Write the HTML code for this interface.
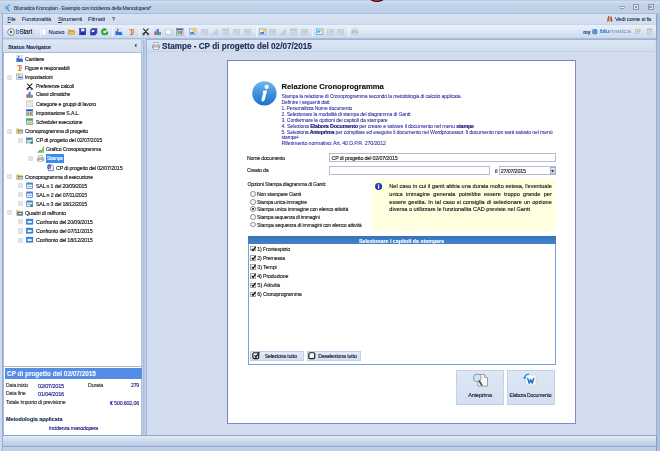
<!DOCTYPE html>
<html lang="it"><head><meta charset="utf-8"><title>Blumatica Kronoplan</title>
<style>
html,body{margin:0;padding:0}
body{width:660px;height:451px;overflow:hidden;position:relative;background:#c6d6ec;font-family:"Liberation Sans",sans-serif;}
.a{position:absolute;box-sizing:border-box}
.t{position:absolute;white-space:nowrap;line-height:10px;height:10px;font-family:"Liberation Sans",sans-serif;-webkit-text-stroke:.14px currentColor}
.t b{-webkit-text-stroke:.16px currentColor;color:#14147c}
svg{position:absolute;overflow:visible}
.exp{position:absolute;width:3.4px;height:3.4px;background:#e4e6ea;box-shadow:0 0 0 .5px #b4b9c4}
.ck{position:absolute;box-sizing:border-box;width:5.2px;height:5.2px;border:.5px solid #a6a6a6;background:#fff}
.rd{position:absolute;box-sizing:border-box;width:5.8px;height:5.8px;border:.6px solid #8c8c8c;border-radius:50%;background:radial-gradient(#fff 40%,#e4e4e4)}
.nt{-webkit-text-stroke:.12px currentColor;font-size:5.6px;line-height:8px;height:8px;color:#111;text-align:justify;text-align-last:justify;white-space:nowrap}
#w{position:absolute;left:0;top:0;width:660px;height:451px;will-change:transform;overflow:hidden}
</style></head><body><div id="w">
<!-- frame -->
<div class="a" style="left:0;top:0;width:660px;height:13.7px;background:linear-gradient(#b9cae4 0,#b9cae4 .9px,#d3dff0 1.6px,#c9d7ec 3.2px,#c0d1e8 5px,#bed0e8 12.6px,#a9bcda 13.3px)"></div>
<div class="a" style="left:370px;top:-5px;width:14px;height:6.600px;border-radius:50%;background:radial-gradient(#e8302a 35%,#2a0a0a 62%)"></div>
<div class="a" style="left:0;top:13.7px;width:660px;height:10.8px;background:linear-gradient(#d8e3f2,#d1deef)"></div>
<div class="a" style="left:0;top:24.5px;width:660px;height:14px;background:linear-gradient(#eaf1f9,#dde7f5 45%,#cbd9ed);border-bottom:.5px solid #a9bcd9"></div>
<div class="a" style="left:0;top:38.5px;width:660px;height:397px;background:#c7d6ec"></div>
<!-- status bar -->
<div class="a" style="left:0;top:434.600px;width:660px;height:12.100px;background:linear-gradient(#e3ebf6,#d3dff0 30%,#b9cae3);border-top:.8px solid #8fa7cf;border-bottom:.7px solid #8fa7cf"></div>
<div class="a" style="left:0;top:446.7px;width:660px;height:4.3px;background:#c0d0e8"></div>
<!-- left/right frame edges -->
<div class="a" style="left:0;top:13.700px;width:3.300px;height:437.300px;background:#cddaee;border-right:.9px solid #94abd1"></div>
<div class="a" style="left:656px;top:14px;width:4px;height:437px;background:#adc1de;border-left:.9px solid #86a0ca"></div>
<!-- app icon -->
<svg style="left:4.5px;top:4px" width="5.5" height="7.5" viewBox="0 0 11 15"><path d="M1 7.5L9 1.500M1 7.500L9 13.500M6 3.600V11.400" stroke="#3da5e0" stroke-width="2.2" fill="none" stroke-linecap="round"/></svg>
<!-- window controls -->
<div class="a" style="left:619px;top:6.3px;width:6px;height:3px;border:.5px solid #8796b2;border-radius:1.5px;background:#e9eff8"></div>
<div class="a" style="left:633px;top:4.3px;width:6px;height:5.6px;border:.5px solid #8796b2;background:#dce6f3"></div>
<div class="a" style="left:634.8px;top:5.6px;width:2.4px;height:2.2px;border:.5px solid #8796b2;background:#eef3fa"></div>
<div class="a" style="left:647.5px;top:4.3px;width:6px;height:5.6px;border:.5px solid #8796b2;background:#dce6f3"></div>
<div class="a" style="left:649px;top:5.8px;width:3px;height:2.6px;border:.5px solid #8796b2;background:#eef3fa"></div>

<!-- left nav panel -->
<div class="a" style="left:3.300px;top:39.6px;width:139.200px;height:13px;background:linear-gradient(#dde7f4,#d3dff0);border-bottom:.5px solid #a9bcd9;border-right:.5px solid #b4c5e0"></div>
<div class="a" style="left:3.300px;top:52.5px;width:139.200px;height:382.200px;background:#fff;border:.5px solid #a9bcd9;border-top:none;border-bottom:none"></div>
<div class="a" style="left:4.3px;top:365.700px;width:137.7px;height:1px;background:#b4b7c0"></div>
<!-- splitter -->
<div class="a" style="left:142.5px;top:39.5px;width:3.5px;height:395px;background:linear-gradient(90deg,#9fb3d4,#b4c5e0 40%,#c3d2e9)"></div>
<!-- info panel -->
<div class="a" style="left:4.5px;top:368px;width:137px;height:11px;background:#558ce6"></div>

<!-- main panel -->
<div class="a" style="left:146px;top:39.3px;width:510.5px;height:395.4px;background:#d1ddef;border:.6px solid #9fb3d6;border-bottom:none"></div>
<div class="a" style="left:146.6px;top:39.9px;width:508.8px;height:12px;background:linear-gradient(#dbe5f3,#d2deef);border-bottom:.5px solid #c4d1e7"></div>
<!-- dialog -->
<div class="a" style="left:227px;top:60px;width:349.300px;height:363.800px;background:#fff;border:1.2px solid #8388cc;border-left:1.600px solid #7a7fc6;border-top:1.600px solid #7a7fc6"></div>

<!-- tree selection -->
<div class="a" style="left:45.5px;top:154.2px;width:18.5px;height:8.6px;background:#3a8cf0"></div>

<!-- inputs -->
<div class="a" style="left:329px;top:153.2px;width:227px;height:8.6px;background:#fff;border:.6px solid #b8bcd0"></div>
<div class="a" style="left:329px;top:166.3px;width:161px;height:9px;background:#fff;border:.6px solid #b8bcd0"></div>
<div class="a" style="left:499px;top:166.3px;width:57px;height:9px;background:#fff;border:.6px solid #b8bcd0"></div>
<div class="a" style="left:550px;top:167px;width:5.5px;height:7.7px;background:linear-gradient(#e8ecf4,#b9c3d8);border:.5px solid #a7aec6"></div>
<svg style="left:551.2px;top:169.6px" width="3.2" height="2.2" viewBox="0 0 4 3"><path d="M0 0H4L2 3z" fill="#222"/></svg>

<!-- note box -->
<div class="a" style="left:371.500px;top:178.8px;width:184.500px;height:52.500px;background:#ffffe0"></div>
<svg style="left:374.800px;top:182.900px" width="7.2" height="7.2" viewBox="0 0 14 14"><circle cx="7" cy="7" r="6.800" fill="#1a2fb0"/><circle cx="7" cy="5" r="4.500" fill="#3a5fd8" opacity=".6"/><circle cx="7" cy="3.8" r="1.3" fill="#fff"/><rect x="5.9" y="5.8" width="2.2" height="5.2" fill="#fff"/></svg>
<div class="a nt" style="left:389.3px;top:182.2px;width:162.5px">Nel caso in cui il gantt abbia una durata molto estesa, l'eventuale</div>
<div class="a nt" style="left:389.3px;top:189.9px;width:162.5px">unica immagine generata potrebbe essere troppo grande per</div>
<div class="a nt" style="left:389.3px;top:197.6px;width:162.5px">essere gestita. In tal caso si consiglia di selezionare un opzione</div>
<div class="a nt" style="left:389.3px;top:205.3px;width:162.5px;text-align-last:left">diversa o utilizzare le funzionalita CAD previste nel Gantt</div>

<!-- chapter list -->
<div class="a" style="left:247.6px;top:236px;width:308.4px;height:128.900px;background:#fff;border:.8px solid #77a3dc"></div>
<div class="a" style="left:247.6px;top:236px;width:308.4px;height:8.2px;background:linear-gradient(#3974ba,#4381c8)"></div>

<!-- small buttons -->
<div class="a" style="left:250px;top:350.5px;width:54px;height:10.3px;background:linear-gradient(#e2eaf6,#d3dff1);border:.5px solid #c3d1e8"></div>
<div class="a" style="left:306.7px;top:350.5px;width:54px;height:10.3px;background:linear-gradient(#e2eaf6,#d3dff1);border:.5px solid #c3d1e8"></div>
<!-- big buttons -->
<div class="a" style="left:456px;top:369.7px;width:48px;height:35.2px;background:linear-gradient(#dde7f5,#d3dff1);border:.5px solid #c3d1e8"></div>
<div class="a" style="left:506.7px;top:369.7px;width:48px;height:35.2px;background:linear-gradient(#dde7f5,#d3dff1);border:.5px solid #c3d1e8"></div>


<!-- big info icon -->
<svg style="left:251.6px;top:81.4px" width="24.8" height="24.8" viewBox="0 0 50 50"><defs><linearGradient id="gi" x1="0" y1="0" x2="0" y2="1"><stop offset="0" stop-color="#74b6ea"/><stop offset=".55" stop-color="#3a8fda"/><stop offset="1" stop-color="#1c72c6"/></linearGradient></defs><circle cx="25" cy="25" r="24.5" fill="url(#gi)"/><circle cx="29.500" cy="12" r="4.200" fill="#fff"/><path d="M23.500 19.500l7-1L26 37q-.9 3.800-4.200 4.200-3.600.2-2.600-3.800l3.300-13.400q.3-1.800-1.700-2.400z" fill="#fff"/></svg>
<!-- anteprima icon -->
<svg style="left:472px;top:373px" width="17" height="14" viewBox="0 0 34 28"><path d="M12 3h13l6 6v17H12z" fill="#fafafa" stroke="#8a8a8a" stroke-width="1.600"/><path d="M25 3v6h6" fill="#e4e4e4" stroke="#8a8a8a" stroke-width="1.300"/><circle cx="10.500" cy="9.500" r="7.500" fill="#cfe6f7" stroke="#8f9aa8" stroke-width="2.200"/><path d="M14.500 16l5 8" stroke="#555" stroke-width="3.400" stroke-linecap="round"/></svg>
<!-- elabora icon -->
<svg style="left:522.500px;top:373px" width="15" height="14" viewBox="0 0 30 28"><path d="M6 4h20v22H6z" fill="#fbfbfb" stroke="#d2d2d2" stroke-width="1.200"/><path d="M6 22h20v4H6z" fill="#e6e6e6"/><path d="M9.500 11l3 9.500 3-7.500 3 7.500 3-9.500" fill="none" stroke="#1f6fc4" stroke-width="2.800" stroke-linejoin="round" stroke-linecap="round"/><path d="M3 10q1-7 8-7.500" fill="none" stroke="#2d9fe0" stroke-width="2.600" stroke-linecap="round"/><path d="M0 8l3.500 5 3.500-5z" fill="#2d9fe0"/></svg>
<!-- select buttons icons -->
<svg style="left:251.800px;top:351.400px" width="8.200" height="8.200" viewBox="0 0 14 14"><rect x="1.500" y="3" width="10" height="10" rx="2.200" fill="#fff" stroke="#1a1a1a" stroke-width="2"/><path d="M4.200 7.500l2.500 3L12.500 2" fill="none" stroke="#1a1a1a" stroke-width="2.400"/></svg>
<svg style="left:308.300px;top:351.400px" width="8.200" height="8.200" viewBox="0 0 14 14"><rect x="1.500" y="3" width="10" height="10" rx="2.200" fill="#fff" stroke="#1a1a1a" stroke-width="2"/></svg>
<svg style="left:15.7px;top:55.4px" width="7.3" height="7.3" viewBox="0 0 16 16"><rect x="1" y="1" width="14" height="14" fill="#e6edf8" stroke="#b8c6de" stroke-width=".8"/><path d="M1 15V8l4-3 3 4 3-2 4 3v5z" fill="#2a6fd6"/><circle cx="6" cy="3.5" r="1.8" fill="#e0402a"/></svg>
<svg style="left:15.7px;top:64.4px" width="7.3" height="7.3" viewBox="0 0 16 16"><path d="M2 2.500h11V5H9.500v10h-3V5H2z" fill="#e8782a"/><path d="M12 5v4.500" stroke="#7a6a5a" stroke-width="1.100"/><rect x="10.800" y="9" width="2.400" height="2.400" fill="#9a9a9a"/><rect x="4.500" y="13.500" width="7" height="1.500" fill="#c9641e"/></svg>
<svg style="left:15.7px;top:73.4px" width="7.3" height="7.3" viewBox="0 0 16 16"><rect x="1" y="2" width="14" height="12" fill="#f4f6fa" stroke="#6d86b3" stroke-width="1"/><rect x="1.5" y="2.5" width="8" height="4" fill="#f2c640"/><rect x="4" y="8" width="10.5" height="3.5" fill="#3f7fdc"/></svg>
<svg style="left:26.2px;top:82.7px" width="7.3" height="7.3" viewBox="0 0 16 16"><path d="M3 2l10 11M13 2L3 13" stroke="#222" stroke-width="2.2" stroke-linecap="round"/><circle cx="3.5" cy="13" r="2" fill="none" stroke="#222" stroke-width="1.4"/><circle cx="12.5" cy="13" r="2" fill="none" stroke="#222" stroke-width="1.4"/></svg>
<svg style="left:26.2px;top:91.4px" width="7.3" height="7.3" viewBox="0 0 16 16"><rect x="1" y="7" width="4.5" height="8" fill="#e0413a"/><rect x="5.7" y="2" width="4.6" height="13" fill="#3b78d8"/><rect x="10.5" y="8.5" width="4.5" height="6.5" fill="#4caf50"/></svg>
<svg style="left:26.2px;top:100.4px" width="7.3" height="7.3" viewBox="0 0 16 16"><rect x="1" y="2" width="14" height="12" fill="#f3f5fa" stroke="#9aa9c4" stroke-width="1"/><rect x="1.5" y="2.5" width="13" height="3" fill="#f3dc8a"/><path d="M2 9h12M2 11.5h12" stroke="#c9d2e2" stroke-width="1"/></svg>
<svg style="left:26.2px;top:109.4px" width="7.3" height="7.3" viewBox="0 0 16 16"><rect x="1" y="1" width="14" height="14" fill="#eef2f8" stroke="#3b56a0" stroke-width="1"/><rect x="1.5" y="1.5" width="13" height="3.5" fill="#2b4fb0"/><rect x="3" y="7" width="4" height="6" fill="#4caf50"/><rect x="8.5" y="7" width="4" height="6" fill="#e0553a"/></svg>
<svg style="left:26.2px;top:118.4px" width="7.3" height="7.3" viewBox="0 0 16 16"><rect x="1" y="1.5" width="14" height="13" fill="#f2f6f2" stroke="#3e9a56" stroke-width="1.4"/><rect x="1.5" y="2" width="13" height="4" fill="#46a860"/><rect x="3.5" y="8" width="9" height="4.5" fill="#e8a07a"/></svg>
<svg style="left:15.7px;top:127.4px" width="7.3" height="7.3" viewBox="0 0 16 16"><path d="M1 4h5l1.5 1.5H15V14H1z" fill="#f1c84a" stroke="#c79a26" stroke-width=".8"/><rect x="5" y="7" width="9" height="6" fill="#eaf0fa" stroke="#3f74cf" stroke-width="1"/><rect x="5.5" y="7.5" width="8" height="2" fill="#3f74cf"/></svg>
<svg style="left:26.2px;top:136.70000000000002px" width="7.3" height="7.3" viewBox="0 0 16 16"><rect x="1" y="2" width="13" height="11" fill="#e9f0fb" stroke="#2f66c7" stroke-width="1.3"/><rect x="1.5" y="2.5" width="12" height="3.5" fill="#2f66c7"/><rect x="3" y="7.5" width="6" height="2.5" fill="#f0b73a"/><circle cx="12.5" cy="12.5" r="3" fill="#25a839"/></svg>
<svg style="left:36.7px;top:145.70000000000002px" width="7.3" height="7.3" viewBox="0 0 16 16"><path d="M1 15L7 9l2.5 2L15 1v14z" fill="#5db552"/><path d="M1 15L7 9l2.5 2L15 1" fill="none" stroke="#2f8a2f" stroke-width="1.2"/><path d="M4 15V12M8 15v-5M12 15V6" stroke="#d9efd4" stroke-width="1"/></svg>
<svg style="left:36.7px;top:154.9px" width="7.3" height="7.3" viewBox="0 0 16 16"><rect x="4" y="1.5" width="8" height="5" fill="#fff" stroke="#777" stroke-width=".9"/><path d="M1 7.5q0-1.5 1.5-1.5h11q1.5 0 1.5 1.5V12H1z" fill="#c9ccd4" stroke="#666" stroke-width=".9"/><rect x="3.5" y="10" width="9" height="4.5" fill="#f6f6f6" stroke="#777" stroke-width=".9"/></svg>
<svg style="left:47.2px;top:163.9px" width="7.3" height="7.3" viewBox="0 0 16 16"><path d="M3 1.5h7.5L14 5v9.5H3z" fill="#f4f6fb" stroke="#2a2f7a" stroke-width="1.3"/><rect x="1" y="3" width="7.5" height="7" fill="#2a2f8a"/><path d="M3 5l1 3.5 1-2.5 1 2.5 1-3.5" stroke="#fff" stroke-width=".9" fill="none"/></svg>
<svg style="left:15.7px;top:172.9px" width="7.3" height="7.3" viewBox="0 0 16 16"><path d="M1 4h5l1.5 1.5H15V14H1z" fill="#f1c84a" stroke="#c79a26" stroke-width=".8"/><rect x="5" y="7" width="9" height="6" fill="#eaf0fa" stroke="#3f74cf" stroke-width="1"/><rect x="5.5" y="7.5" width="8" height="2" fill="#3f74cf"/></svg>
<svg style="left:26.2px;top:181.9px" width="7.3" height="7.3" viewBox="0 0 16 16"><rect x="1.5" y="2" width="13" height="12" fill="#f2f6fc" stroke="#3a76d2" stroke-width="1.6"/><rect x="2" y="2.5" width="12" height="3" fill="#3a76d2"/><path d="M4 9.5h8" stroke="#3a76d2" stroke-width="1.4"/></svg>
<svg style="left:26.2px;top:190.9px" width="7.3" height="7.3" viewBox="0 0 16 16"><rect x="1.5" y="2" width="13" height="12" fill="#f2f6fc" stroke="#3a76d2" stroke-width="1.6"/><rect x="2" y="2.5" width="12" height="3" fill="#3a76d2"/><path d="M4 9.5h8" stroke="#3a76d2" stroke-width="1.4"/></svg>
<svg style="left:26.2px;top:199.9px" width="7.3" height="7.3" viewBox="0 0 16 16"><rect x="1.5" y="2" width="13" height="12" fill="#f2f6fc" stroke="#3a76d2" stroke-width="1.6"/><rect x="2" y="2.5" width="12" height="3" fill="#3a76d2"/><path d="M4 9.5h8" stroke="#3a76d2" stroke-width="1.4"/><circle cx="12.5" cy="12.5" r="3" fill="#25a839"/></svg>
<svg style="left:15.7px;top:208.9px" width="7.3" height="7.3" viewBox="0 0 16 16"><path d="M1 3.5h5l1.5 1.5H15V14H1z" fill="#f1c84a" stroke="#c79a26" stroke-width=".8"/><rect x="4" y="7" width="10.5" height="6.5" fill="#2f86e6" stroke="#1f62b8" stroke-width="1"/><rect x="6" y="9" width="6.5" height="2.5" fill="#dbeafc"/></svg>
<svg style="left:26.2px;top:217.9px" width="7.3" height="7.3" viewBox="0 0 16 16"><rect x="1" y="2.5" width="14" height="11" fill="#2f8ae8" stroke="#1f62b8" stroke-width="1.2"/><rect x="3.5" y="6.5" width="9" height="4.5" fill="#e4effc"/></svg>
<svg style="left:26.2px;top:227.1px" width="7.3" height="7.3" viewBox="0 0 16 16"><rect x="1" y="2.5" width="14" height="11" fill="#2f8ae8" stroke="#1f62b8" stroke-width="1.2"/><rect x="3.5" y="6.5" width="9" height="4.5" fill="#e4effc"/></svg>
<svg style="left:26.2px;top:236.4px" width="7.3" height="7.3" viewBox="0 0 16 16"><rect x="1" y="2.5" width="14" height="11" fill="#2f8ae8" stroke="#1f62b8" stroke-width="1.2"/><rect x="3.5" y="6.5" width="9" height="4.5" fill="#e4effc"/></svg>
<div class="exp" style="left:8px;top:75.5px"></div>
<div class="exp" style="left:8px;top:129.5px"></div>
<div class="exp" style="left:19px;top:138.8px"></div>
<div class="exp" style="left:29px;top:157.0px"></div>
<div class="exp" style="left:8px;top:175.0px"></div>
<div class="exp" style="left:19px;top:184.0px"></div>
<div class="exp" style="left:19px;top:193.0px"></div>
<div class="exp" style="left:19px;top:202.0px"></div>
<div class="exp" style="left:8px;top:211.0px"></div>
<div class="exp" style="left:19px;top:220.0px"></div>
<div class="exp" style="left:19px;top:229.2px"></div>
<div class="exp" style="left:19px;top:238.5px"></div>
<svg style="left:6.800000000000001px;top:27.6px" width="8.2" height="8.2" viewBox="0 0 16 16"><circle cx="8" cy="8" r="6.6" fill="#fff" stroke="#444" stroke-width="1.3"/><path d="M6.3 4.6L11.2 8l-4.9 3.4z" fill="#333"/></svg>
<svg style="left:40.25px;top:27.8px" width="7.5" height="7.5" viewBox="0 0 16 16"><path d="M3 1h7l3 3v11H3z" fill="#fff" stroke="#b8bfcc" stroke-width=".9"/></svg>
<svg style="left:68.25px;top:27.8px" width="7.5" height="7.5" viewBox="0 0 16 16"><path d="M1 4h5l1.5 1.5H13V13H1z" fill="#e9a030" stroke="#b87818" stroke-width=".8"/><path d="M3.500 7.500h12L13 13H1z" fill="#f6c860" stroke="#b87818" stroke-width=".8"/></svg>
<svg style="left:79.25px;top:27.8px" width="7.5" height="7.5" viewBox="0 0 16 16"><rect x="1.5" y="1.5" width="13" height="13" fill="#2f3fc0" stroke="#1a237e" stroke-width="1"/><rect x="4.5" y="2" width="7" height="5" fill="#eef"/><rect x="5" y="9.5" width="6" height="5" fill="#1a237e"/></svg>
<svg style="left:90.05px;top:27.8px" width="7.5" height="7.5" viewBox="0 0 16 16"><rect x="4" y="1" width="11" height="11" fill="#4a58d0" stroke="#1a237e" stroke-width=".9"/><rect x="1" y="4" width="11" height="11" fill="#2f3fc0" stroke="#1a237e" stroke-width=".9"/><rect x="3.5" y="4.5" width="6" height="4" fill="#eef"/></svg>
<svg style="left:100.75px;top:27.8px" width="7.5" height="7.5" viewBox="0 0 16 16"><path d="M8 2.500a5.500 5.500 0 1 0 5.500 5.500" fill="none" stroke="#1f7a16" stroke-width="4"/><path d="M8 2.500a5.500 5.500 0 1 0 5.500 5.500" fill="none" stroke="#44b832" stroke-width="2.600"/><path d="M7 0l6 3-5 4z" fill="#2c9a20"/></svg>
<svg style="left:115.45px;top:27.8px" width="7.5" height="7.5" viewBox="0 0 16 16"><rect x="1" y="1" width="14" height="14" fill="#e6edf8" stroke="#b8c6de" stroke-width=".8"/><path d="M1 15V8l4-3 3 4 3-2 4 3v5z" fill="#2a6fd6"/><circle cx="6" cy="3.5" r="1.8" fill="#e0402a"/></svg>
<svg style="left:128.45px;top:27.8px" width="7.5" height="7.5" viewBox="0 0 16 16"><path d="M2 2.500h11V5H9.500v10h-3V5H2z" fill="#e8782a"/><path d="M12 5v4.500" stroke="#7a6a5a" stroke-width="1.100"/><rect x="10.800" y="9" width="2.400" height="2.400" fill="#9a9a9a"/><rect x="4.500" y="13.500" width="7" height="1.500" fill="#c9641e"/></svg>
<svg style="left:142.45px;top:27.8px" width="7.5" height="7.5" viewBox="0 0 16 16"><path d="M3 2l10 11M13 2L3 13" stroke="#222" stroke-width="2.2" stroke-linecap="round"/><circle cx="3.5" cy="13" r="2" fill="none" stroke="#222" stroke-width="1.4"/><circle cx="12.5" cy="13" r="2" fill="none" stroke="#222" stroke-width="1.4"/></svg>
<svg style="left:154.05px;top:27.8px" width="7.5" height="7.5" viewBox="0 0 16 16"><rect x="1" y="7" width="4.5" height="8" fill="#e0413a"/><rect x="5.7" y="2" width="4.6" height="13" fill="#3b78d8"/><rect x="10.5" y="8.5" width="4.5" height="6.5" fill="#4caf50"/></svg>
<svg style="left:165.35px;top:27.8px" width="7.5" height="7.5" viewBox="0 0 16 16"><rect x="1" y="2.5" width="14" height="11" fill="#f6f8fc" stroke="#9aa6c0" stroke-width="1"/><rect x="1.5" y="3" width="13" height="2.5" fill="#dfe5f2"/><path d="M13 3v10" stroke="#b8c2d8" stroke-width="1.5"/></svg>
<svg style="left:176.25px;top:27.8px" width="7.5" height="7.5" viewBox="0 0 16 16"><rect x="1" y="1" width="14" height="14" fill="#eef2f8" stroke="#4a5f8f" stroke-width="1"/><rect x="1.5" y="1.5" width="13" height="3.5" fill="#3a64b8"/><rect x="3" y="6.5" width="4.5" height="6.5" fill="#58b05a"/><rect x="8.5" y="6.5" width="4.5" height="6.5" fill="#e2603c"/></svg>
<svg style="left:189.45px;top:27.8px" width="7.5" height="7.5" viewBox="0 0 16 16"><rect x="1" y="2" width="14" height="12" fill="#eaf0fa" stroke="#5d79b3" stroke-width="1"/><rect x="7" y="2.5" width="7.5" height="5.5" fill="#f3d43c"/><rect x="3" y="8.5" width="8" height="4" fill="#3f7fdc"/></svg>
<svg style="left:201.25px;top:27.8px" width="7.5" height="7.5" viewBox="0 0 16 16"><rect x="1.5" y="3" width="13" height="10.5" fill="#d9dde6" stroke="#aeb4c2" stroke-width="1"/><rect x="4" y="6" width="8" height="4.5" fill="#c3c8d4"/></svg>
<svg style="left:211.05px;top:27.8px" width="7.5" height="7.5" viewBox="0 0 16 16"><path d="M1.5 14.5L14.5 2v12.5z" fill="#c9cdd8" stroke="#b0b6c4" stroke-width=".8"/></svg>
<svg style="left:221.75px;top:27.8px" width="7.5" height="7.5" viewBox="0 0 16 16"><rect x="1.5" y="2" width="13" height="12" fill="#dadee7" stroke="#aeb4c2" stroke-width="1"/><rect x="2" y="2.5" width="12" height="3" fill="#bcc2cf"/><rect x="4" y="7.5" width="8" height="4.5" fill="#c9ced9"/></svg>
<svg style="left:232.95px;top:27.8px" width="7.5" height="7.5" viewBox="0 0 16 16"><rect x="1.5" y="3" width="13" height="10.5" fill="#d9dde6" stroke="#aeb4c2" stroke-width="1"/><rect x="4" y="6" width="8" height="4.5" fill="#c3c8d4"/></svg>
<svg style="left:244.25px;top:27.8px" width="7.5" height="7.5" viewBox="0 0 16 16"><rect x="1.5" y="3" width="13" height="10.5" fill="#d9dde6" stroke="#aeb4c2" stroke-width="1"/><rect x="4" y="6" width="8" height="4.5" fill="#c3c8d4"/></svg>
<svg style="left:258.85px;top:27.8px" width="7.5" height="7.5" viewBox="0 0 16 16"><rect x="1" y="2" width="14" height="12" fill="#eaf0fa" stroke="#5d79b3" stroke-width="1"/><rect x="7" y="2.5" width="7.5" height="5.5" fill="#f3d43c"/><rect x="3" y="8.5" width="8" height="4" fill="#3f7fdc"/></svg>
<svg style="left:268.95px;top:27.8px" width="7.5" height="7.5" viewBox="0 0 16 16"><rect x="1.5" y="3" width="13" height="10.5" fill="#d9dde6" stroke="#aeb4c2" stroke-width="1"/><rect x="4" y="6" width="8" height="4.5" fill="#c3c8d4"/></svg>
<svg style="left:278.75px;top:27.8px" width="7.5" height="7.5" viewBox="0 0 16 16"><path d="M1.5 14.5L14.5 2v12.5z" fill="#c9cdd8" stroke="#b0b6c4" stroke-width=".8"/></svg>
<svg style="left:289.95px;top:27.8px" width="7.5" height="7.5" viewBox="0 0 16 16"><rect x="1.5" y="2" width="13" height="12" fill="#dadee7" stroke="#aeb4c2" stroke-width="1"/><rect x="2" y="2.5" width="12" height="3" fill="#bcc2cf"/><rect x="4" y="7.5" width="8" height="4.5" fill="#c9ced9"/></svg>
<svg style="left:300.55px;top:27.8px" width="7.5" height="7.5" viewBox="0 0 16 16"><rect x="1.5" y="3" width="13" height="10.5" fill="#d9dde6" stroke="#aeb4c2" stroke-width="1"/><rect x="4" y="6" width="8" height="4.5" fill="#c3c8d4"/></svg>
<svg style="left:315.85px;top:27.8px" width="7.5" height="7.5" viewBox="0 0 16 16"><rect x="1" y="2" width="14" height="12" fill="#e2f1fb" stroke="#3d8fd0" stroke-width="1.2"/><rect x="3" y="5" width="6" height="5" fill="#3fb3e6"/><rect x="9" y="4" width="4.5" height="3.5" fill="#f3d43c"/></svg>
<svg style="left:326.55px;top:27.8px" width="7.5" height="7.5" viewBox="0 0 16 16"><rect x="1.5" y="3" width="13" height="10.5" fill="#d9dde6" stroke="#aeb4c2" stroke-width="1"/><rect x="4" y="6" width="8" height="4.5" fill="#c3c8d4"/></svg>
<svg style="left:337.45px;top:27.8px" width="7.5" height="7.5" viewBox="0 0 16 16"><rect x="1.5" y="3" width="13" height="10.5" fill="#d9dde6" stroke="#aeb4c2" stroke-width="1"/><rect x="4" y="6" width="8" height="4.5" fill="#c3c8d4"/></svg>
<svg style="left:350.95px;top:27.8px" width="7.5" height="7.5" viewBox="0 0 16 16"><rect x="4" y="2" width="8" height="4.5" fill="#e6e8ee" stroke="#aab" stroke-width=".9"/><rect x="1.5" y="6" width="13" height="6" rx="1" fill="#c4c8d2" stroke="#a4aab8" stroke-width=".9"/><rect x="4" y="10" width="8" height="4" fill="#e9ebf0" stroke="#aab" stroke-width=".9"/></svg>
<div class="a" style="left:39.8px;top:27px;width:1px;height:9.5px;background:linear-gradient(90deg,#b3c3dc 50%,#f2f6fb 50%)"></div>
<div class="a" style="left:111.5px;top:27px;width:1px;height:9.5px;background:linear-gradient(90deg,#b3c3dc 50%,#f2f6fb 50%)"></div>
<div class="a" style="left:139px;top:27px;width:1px;height:9.5px;background:linear-gradient(90deg,#b3c3dc 50%,#f2f6fb 50%)"></div>
<div class="a" style="left:187px;top:27px;width:1px;height:9.5px;background:linear-gradient(90deg,#b3c3dc 50%,#f2f6fb 50%)"></div>
<div class="a" style="left:255.5px;top:27px;width:1px;height:9.5px;background:linear-gradient(90deg,#b3c3dc 50%,#f2f6fb 50%)"></div>
<div class="a" style="left:312px;top:27px;width:1px;height:9.5px;background:linear-gradient(90deg,#b3c3dc 50%,#f2f6fb 50%)"></div>
<div class="a" style="left:347.5px;top:27px;width:1px;height:9.5px;background:linear-gradient(90deg,#b3c3dc 50%,#f2f6fb 50%)"></div>
<svg style="left:605.5px;top:15.3px" width="7" height="7" viewBox="0 0 16 16"><path d="M2 15L5 2h2.5L6 15z" fill="#d84a2a"/><path d="M6.5 15L8 2h2.5L11 15z" fill="#e8a02a"/><path d="M11 15L10.5 4H13l2 11z" fill="#7a4ac0"/></svg>
<svg style="left:634.8px;top:28.2px" width="6.5" height="6.5" viewBox="0 0 16 16"><rect x="2" y="4" width="9" height="10" fill="#e8ecf4" stroke="#8a95b0" stroke-width=".9"/><path d="M11.5 1l1.2 2.6 2.8.3-2.1 1.9.6 2.8-2.5-1.4L9 8.600l.6-2.800L7.500 3.900l2.800-.3z" fill="#f2b62a"/><path d="M4 11l2-4 2 4" stroke="#3a5fb8" stroke-width="1.2" fill="none"/></svg>
<svg style="left:645.8px;top:28.2px" width="6.8" height="6.8" viewBox="0 0 16 16"><rect x="3" y="4" width="10" height="10.5" fill="#d5d9e2" stroke="#a9afbe" stroke-width="1"/><rect x="2" y="2" width="12" height="2.5" fill="#c3c8d4" stroke="#a9afbe" stroke-width=".8"/></svg>
<svg style="left:592.2px;top:28.8px" width="5.6" height="5.6" viewBox="0 0 16 16"><rect x="1" y="1" width="14" height="14" rx="4" fill="#2a6fc9"/><path d="M8 3v10M3 8h10" stroke="#fff" stroke-width="2.600"/><rect x="5.500" y="5.500" width="5" height="5" fill="#2a6fc9"/></svg>
<svg style="left:152px;top:41.8px" width="8" height="8" viewBox="0 0 16 16"><rect x="4" y="1.5" width="8" height="5" fill="#fff" stroke="#777" stroke-width=".9"/><path d="M1 7.5q0-1.5 1.5-1.5h11q1.5 0 1.5 1.5V12H1z" fill="#c9ccd4" stroke="#666" stroke-width=".9"/><rect x="3.5" y="10" width="9" height="4.5" fill="#f6f6f6" stroke="#777" stroke-width=".9"/></svg>
<div class="rd" style="left:249.8px;top:191.1px"></div>
<div class="rd" style="left:249.8px;top:198.8px"></div>
<div class="rd" style="left:249.8px;top:206.4px"></div>
<div class="a" style="left:251.5px;top:208.1px;width:2.4px;height:2.4px;border-radius:50%;background:#111"></div>
<div class="rd" style="left:249.8px;top:214.0px"></div>
<div class="rd" style="left:249.8px;top:221.7px"></div>
<div class="ck" style="left:250.4px;top:246.3px"></div>
<svg style="left:250.9px;top:245.8px" width="5.4" height="5.4" viewBox="0 0 10 10"><path d="M1.500 5.500l2.300 2.700L8.500 1.500" fill="none" stroke="#0a0a0a" stroke-width="2.200"/></svg>
<div class="ck" style="left:250.4px;top:255.4px"></div>
<svg style="left:250.9px;top:254.9px" width="5.4" height="5.4" viewBox="0 0 10 10"><path d="M1.500 5.500l2.300 2.700L8.500 1.500" fill="none" stroke="#0a0a0a" stroke-width="2.200"/></svg>
<div class="ck" style="left:250.4px;top:264.4px"></div>
<svg style="left:250.9px;top:263.9px" width="5.4" height="5.4" viewBox="0 0 10 10"><path d="M1.500 5.500l2.300 2.700L8.500 1.500" fill="none" stroke="#0a0a0a" stroke-width="2.200"/></svg>
<div class="ck" style="left:250.4px;top:273.4px"></div>
<svg style="left:250.9px;top:272.9px" width="5.4" height="5.4" viewBox="0 0 10 10"><path d="M1.500 5.500l2.300 2.700L8.500 1.500" fill="none" stroke="#0a0a0a" stroke-width="2.200"/></svg>
<div class="ck" style="left:250.4px;top:282.5px"></div>
<svg style="left:250.9px;top:282.0px" width="5.4" height="5.4" viewBox="0 0 10 10"><path d="M1.500 5.500l2.300 2.700L8.500 1.500" fill="none" stroke="#0a0a0a" stroke-width="2.200"/></svg>
<div class="ck" style="left:250.4px;top:291.6px"></div>
<svg style="left:250.9px;top:291.1px" width="5.4" height="5.4" viewBox="0 0 10 10"><path d="M1.500 5.500l2.300 2.700L8.500 1.500" fill="none" stroke="#0a0a0a" stroke-width="2.200"/></svg>
<span class="t" style="left:14px;top:3.00px;font-size:5.05px;color:#3a4a66;letter-spacing:-0.157px;">Blumatica Kronoplan - Esempio con incidenza della Manodopera*</span>
<span class="t" style="left:7.5px;top:14.00px;font-size:5.31px;color:#2f4166;letter-spacing:-0.140px;"><u>F</u>ile</span>
<span class="t" style="left:22px;top:14.00px;font-size:5.76px;color:#2f4166;letter-spacing:-0.169px;">Funzionalità</span>
<span class="t" style="left:58px;top:14.00px;font-size:6.00px;color:#2f4166;letter-spacing:-0.187px;"><u>S</u>trumenti</span>
<span class="t" style="left:88px;top:14.00px;font-size:6.19px;color:#2f4166;letter-spacing:-0.170px;">Filmati</span>
<span class="t" style="left:112px;top:14.00px;font-size:5.40px;color:#2f4166;">?</span>
<span class="t" style="left:615px;top:14.00px;font-size:5.69px;color:#2a3a5a;letter-spacing:-0.168px;">Vedi come si fa</span>
<span class="t" style="left:16px;top:26.50px;font-size:6.42px;color:#223;letter-spacing:-0.187px;"><span style="color:#1a6fd0">b</span>Start</span>
<span class="t" style="left:48.4px;top:26.60px;font-size:5.85px;color:#2a3670;letter-spacing:-0.221px;">Nuovo</span>
<span class="t" style="left:583.3px;top:26.60px;font-size:4.98px;color:#1f3f8f;font-weight:bold;">my</span>
<span class="t" style="left:600px;top:26.30px;font-size:5.70px;color:#222;transform:scaleX(1.27);transform-origin:0 50%;"><span style="color:#1e6fc4">blu</span><span style="color:#8fa3bd">matica</span></span>
<span class="t" style="left:8.2px;top:41.60px;font-size:5.42px;color:#1d2b50;font-weight:bold;">Status Navigator</span>
<span class="t" style="left:134.5px;top:41.00px;font-size:8.00px;color:#334;font-weight:bold;">‹</span>
<span class="t" style="left:162px;top:41.50px;font-size:8.16px;color:#1d2b50;font-weight:bold;">Stampe - CP di progetto del 02/07/2015</span>
<span class="t" style="left:25px;top:54.00px;font-size:5.38px;color:#14141c;letter-spacing:-0.166px;">Cantiere</span>
<span class="t" style="left:25px;top:63.00px;font-size:5.14px;color:#14141c;letter-spacing:-0.148px;">Figure e responsabili</span>
<span class="t" style="left:25px;top:72.00px;font-size:5.25px;color:#14141c;letter-spacing:-0.160px;">Impostazioni</span>
<span class="t" style="left:36px;top:81.00px;font-size:5.12px;color:#14141c;letter-spacing:-0.148px;">Preferenze calcoli</span>
<span class="t" style="left:36px;top:90.00px;font-size:4.91px;color:#14141c;letter-spacing:-0.140px;">Classi climatiche</span>
<span class="t" style="left:36px;top:99.00px;font-size:5.23px;color:#14141c;letter-spacing:-0.150px;">Categorie e gruppi di lavoro</span>
<span class="t" style="left:36px;top:108.00px;font-size:5.21px;color:#14141c;letter-spacing:-0.160px;">Impostazione S.A.L.</span>
<span class="t" style="left:36px;top:117.00px;font-size:5.06px;color:#14141c;letter-spacing:-0.163px;">Scheduler esecuzione</span>
<span class="t" style="left:25px;top:126.00px;font-size:5.26px;color:#14141c;letter-spacing:-0.170px;">Cronoprogramma di progetto</span>
<span class="t" style="left:36px;top:135.30px;font-size:5.33px;color:#14141c;letter-spacing:-0.159px;">CP di progetto del 02/07/2015</span>
<span class="t" style="left:46px;top:144.30px;font-size:5.20px;color:#14141c;letter-spacing:-0.175px;">Grafico Cronoprogramma</span>
<span class="t" style="left:56px;top:162.50px;font-size:5.37px;color:#14141c;letter-spacing:-0.161px;">CP di progetto del 02/07/2015</span>
<span class="t" style="left:25px;top:171.50px;font-size:5.12px;color:#14141c;letter-spacing:-0.170px;">Cronoprogramma di esecuzione</span>
<span class="t" style="left:36px;top:180.50px;font-size:5.25px;color:#14141c;letter-spacing:-0.162px;">SAL n 1 del 20/09/2015</span>
<span class="t" style="left:36px;top:189.50px;font-size:5.29px;color:#14141c;letter-spacing:-0.162px;">SAL n 2 del 07/11/2015</span>
<span class="t" style="left:36px;top:198.50px;font-size:5.25px;color:#14141c;letter-spacing:-0.162px;">SAL n 3 del 18/12/2015</span>
<span class="t" style="left:25px;top:207.50px;font-size:5.46px;color:#14141c;letter-spacing:-0.151px;">Quadri di raffronto</span>
<span class="t" style="left:36px;top:216.50px;font-size:5.37px;color:#14141c;letter-spacing:-0.165px;">Confronto del 20/09/2015</span>
<span class="t" style="left:36px;top:225.70px;font-size:5.40px;color:#14141c;letter-spacing:-0.165px;">Confronto del 07/11/2015</span>
<span class="t" style="left:36px;top:235.00px;font-size:5.37px;color:#14141c;letter-spacing:-0.165px;">Confronto del 18/12/2015</span>
<span class="t" style="left:47px;top:153.50px;font-size:4.91px;color:#fff;letter-spacing:-0.184px;">Stampe</span>
<span class="t" style="left:7px;top:368.60px;font-size:6.41px;color:#f4f8ff;font-weight:bold;">CP di progetto del 02/07/2015</span>
<span class="t" style="left:6px;top:380.00px;font-size:5.05px;color:#333;letter-spacing:-0.140px;">Data inizio</span>
<span class="t" style="left:38px;top:381.00px;font-size:5.57px;color:#1c1c8c;letter-spacing:-0.182px;">02/07/2015</span>
<span class="t" style="left:88px;top:380.00px;font-size:5.35px;color:#333;letter-spacing:-0.175px;">Durata</span>
<span class="t" style="left:131px;top:380.00px;font-size:5.14px;color:#1c1c8c;letter-spacing:-0.187px;">279</span>
<span class="t" style="left:6px;top:388.00px;font-size:5.22px;color:#333;letter-spacing:-0.152px;">Data fine</span>
<span class="t" style="left:38px;top:389.00px;font-size:5.57px;color:#1c1c8c;letter-spacing:-0.182px;">01/04/2016</span>
<span class="t" style="left:6px;top:396.50px;font-size:5.24px;color:#333;letter-spacing:-0.149px;">Totale importo di previsione</span>
<span class="t" style="left:110px;top:398.00px;font-size:5.32px;color:#1c1c8c;letter-spacing:-0.169px;">€ 500.602,06</span>
<span class="t" style="left:6px;top:414.00px;font-size:5.39px;color:#1d2b50;font-weight:bold;">Metodologia applicata</span>
<span class="t" style="left:49px;top:422.50px;font-size:5.16px;color:#1c1c8c;letter-spacing:-0.171px;">Incidenza manodopera</span>
<span class="t" style="left:281.5px;top:81.50px;font-size:7.65px;color:#111;font-weight:bold;">Relazione Cronoprogramma</span>
<span class="t" style="left:281.5px;top:91.40px;font-size:5.10px;color:#23239a;letter-spacing:-0.154px;-webkit-text-stroke:.04px currentColor;">Stampa la relazione di Cronoprogramma secondo la metodologia di calcolo applicata.</span>
<span class="t" style="left:281.5px;top:97.25px;font-size:5.15px;color:#23239a;letter-spacing:-0.137px;-webkit-text-stroke:.04px currentColor;">Definire i seguenti dati:</span>
<span class="t" style="left:281.5px;top:103.10px;font-size:5.06px;color:#23239a;letter-spacing:-0.166px;-webkit-text-stroke:.04px currentColor;">1. Personalizza Nome documento</span>
<span class="t" style="left:281.5px;top:108.95px;font-size:5.15px;color:#23239a;letter-spacing:-0.153px;-webkit-text-stroke:.04px currentColor;">2. Selezionare la modalità di stampa del diagramma di Gantt</span>
<span class="t" style="left:281.5px;top:114.80px;font-size:5.22px;color:#23239a;letter-spacing:-0.151px;-webkit-text-stroke:.04px currentColor;">3. Confermare le opzioni dei capitoli da stampare</span>
<span class="t" style="left:281.5px;top:120.65px;font-size:5.35px;color:#23239a;letter-spacing:-0.168px;-webkit-text-stroke:.04px currentColor;">4. Seleziona <b>Elabora Documento</b> per creare e salvare il documento nel menu <b>stampe</b></span>
<span class="t" style="left:281.5px;top:126.50px;font-size:5.24px;color:#23239a;letter-spacing:-0.160px;-webkit-text-stroke:.04px currentColor;">5. Seleziona <b>Anteprima</b> per compilare ed eseguire il documento nel Wordprocessor. Il documento non sarà salvato nel menù</span>
<span class="t" style="left:281.5px;top:132.35px;font-size:5.00px;color:#23239a;letter-spacing:-0.169px;-webkit-text-stroke:.04px currentColor;">stampe¹</span>
<span class="t" style="left:281.5px;top:138.20px;font-size:5.38px;color:#23239a;letter-spacing:-0.159px;-webkit-text-stroke:.04px currentColor;">Riferimento normativo: Art. 40 D.P.R. 270/2012</span>
<span class="t" style="left:247px;top:152.70px;font-size:5.16px;color:#222;letter-spacing:-0.190px;">Nome documento</span>
<span class="t" style="left:331.5px;top:152.70px;font-size:5.33px;color:#222;letter-spacing:-0.159px;">CP di progetto del 02/07/2015</span>
<span class="t" style="left:247px;top:165.30px;font-size:5.24px;color:#222;letter-spacing:-0.167px;">Creato da</span>
<span class="t" style="left:495px;top:165.50px;font-size:6.00px;color:#222;letter-spacing:-0.088px;">il</span>
<span class="t" style="left:500.8px;top:165.70px;font-size:5.35px;color:#222;letter-spacing:-0.175px;">27/07/2015</span>
<span class="t" style="left:247.5px;top:179.00px;font-size:5.11px;color:#222;letter-spacing:-0.162px;">Opzioni Stampa diagramma di Gantt:</span>
<span class="t" style="left:257px;top:189.00px;font-size:5.24px;color:#222;letter-spacing:-0.171px;">Non stampare Gantt</span>
<span class="t" style="left:257px;top:196.65px;font-size:4.99px;color:#222;letter-spacing:-0.167px;">Stampa unica immagine</span>
<span class="t" style="left:257px;top:204.30px;font-size:5.13px;color:#222;letter-spacing:-0.155px;">Stampa unica immagine con elenco attività</span>
<span class="t" style="left:257px;top:211.95px;font-size:5.00px;color:#222;letter-spacing:-0.162px;">Stampa sequenza di immagini</span>
<span class="t" style="left:257px;top:219.60px;font-size:5.17px;color:#222;letter-spacing:-0.156px;">Stampa sequenza di immagini con elenco attività</span>
<span class="t" style="left:359px;top:235.80px;font-size:5.30px;color:#fff;font-weight:bold;">Selezionare i capitoli da stampare</span>
<span class="t" style="left:257.3px;top:244.00px;font-size:5.30px;color:#222;letter-spacing:-0.153px;">1) Frontespizio</span>
<span class="t" style="left:257.3px;top:253.05px;font-size:5.24px;color:#222;letter-spacing:-0.176px;">2) Premessa</span>
<span class="t" style="left:257.3px;top:262.10px;font-size:5.42px;color:#222;letter-spacing:-0.169px;">3) Tempi</span>
<span class="t" style="left:257.3px;top:271.15px;font-size:5.34px;color:#222;letter-spacing:-0.167px;">4) Produzione</span>
<span class="t" style="left:257.3px;top:280.20px;font-size:5.92px;color:#222;letter-spacing:-0.144px;">5) Attività</span>
<span class="t" style="left:257.3px;top:289.25px;font-size:5.27px;color:#222;letter-spacing:-0.182px;">6) Cronoprogramma</span>
<span class="t" style="left:264.7px;top:350.80px;font-size:5.18px;color:#223;letter-spacing:-0.149px;">Seleziona tutto</span>
<span class="t" style="left:318.3px;top:350.80px;font-size:5.34px;color:#223;letter-spacing:-0.159px;">Deseleziona tutto</span>
<span class="t" style="left:468.3px;top:390.00px;font-size:5.52px;color:#223;letter-spacing:-0.183px;">Anteprima</span>
<span class="t" style="left:509.5px;top:390.00px;font-size:5.09px;color:#223;letter-spacing:-0.173px;">Elabora Documento</span>
</div></body></html>
